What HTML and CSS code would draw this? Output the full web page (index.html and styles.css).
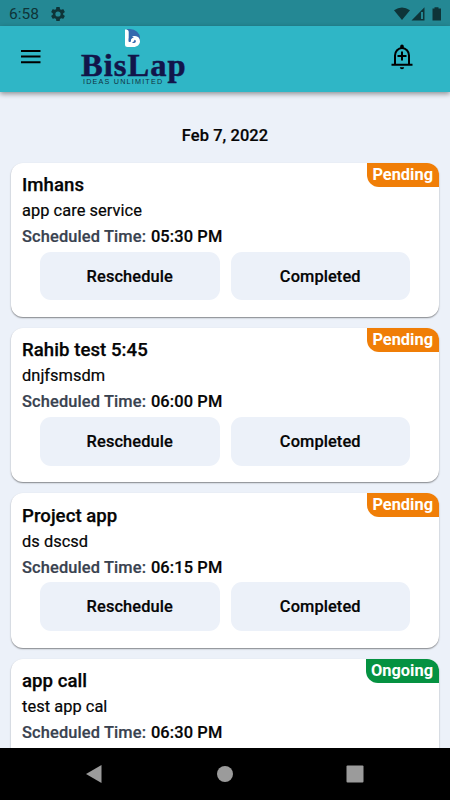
FILE: index.html
```html
<!DOCTYPE html>
<html lang="en">
<head>
  <meta charset="UTF-8">
  <title>BisLap</title>
  <link rel="stylesheet" href="styles.css">
</head>
<body>
  <div class="status-bar">
    <span class="clock">6:58</span>
    <svg class="gear" width="16" height="16" viewBox="1 1 22 22"><path d="M19.14 12.94c.04-.3.06-.61.06-.94s-.02-.64-.07-.94l2.03-1.58a.5.5 0 0 0 .12-.61l-1.92-3.32a.49.49 0 0 0-.59-.22l-2.39.96a7 7 0 0 0-1.62-.94l-.36-2.54A.48.48 0 0 0 13.92 2.4h-3.84a.47.47 0 0 0-.47.41l-.36 2.54a7.4 7.4 0 0 0-1.62.94l-2.39-.96a.48.48 0 0 0-.59.22L2.74 8.87a.47.47 0 0 0 .12.61l2.03 1.58a6 6 0 0 0 0 1.88l-2.03 1.58a.5.5 0 0 0-.12.61l1.92 3.32c.12.22.37.29.59.22l2.39-.96c.5.38 1.03.7 1.62.94l.36 2.54c.05.24.24.41.48.41h3.84c.24 0 .44-.17.47-.41l.36-2.54a7 7 0 0 0 1.62-.94l2.39.96c.22.08.47 0 .59-.22l1.92-3.32a.47.47 0 0 0-.12-.61zM12 15.6a3.6 3.6 0 1 1 0-7.2 3.6 3.6 0 0 1 0 7.2z"/></svg>
    <svg class="signals" width="50" height="16" viewBox="0 0 50 16">
      <path d="M1 4.3Q9 -1.3 17 4.3L9 14z"/>
      <path d="M31.5 1.3V14.5H18.5zM28 6v7h2V6z" fill-rule="evenodd"/>
      <path d="M41.5 1.2h4v1.3h2.500v12h-8.500v-12h2z"/>
    </svg>
  </div>

  <header class="app-bar">
    <svg class="menu" width="20" height="14" viewBox="0 0 20 14"><path d="M0 1h19.5M0 6.5h19.5M0 12.2h19.5"/></svg>
    <div class="logo">
      <svg class="logo-mark" width="16" height="18" viewBox="0 0 16 18">
        <path d="M2 0H5a10 9 0 0 1 10 9v3H2z" fill="#3568ae"/>
        <path d="M0 .5Q3.7 0 3.7 3v9H6C5.300 8.500 7.500 6.800 10 7c3 .3 5 2.300 5 5.200 0 3.400-3 5.800-6.500 5.800H2.500Q0 18 0 15.500z" fill="#fff"/>
        <path d="M3.700 13V9.500Q6 6.500 9 8.500C6.500 8.800 5.500 10.500 5.700 13zM7 13.200q2.500-.2 2.500-2.500 2 .5 1.300 2.400-1.500 1.900-3.800.1z" fill="#3568ae"/>
      </svg>
      <span class="logo-name">BisLap</span>
      <span class="logo-tagline">IDEAS UNLIMITED</span>
    </div>
    <svg class="bell" width="22" height="26" viewBox="0 0 22 26">
      <path class="bell-line" d="M4 20V11.5a7 7.5 0 0 1 14 0V20M.5 20.8h21M11 7.5v9M6.5 12h9"/>
      <path d="M9.2 4V2.2a1.8 1.8 0 0 1 3.6 0V4zM8.8 23.2h4.4Q13 25.2 11 25.2T8.8 23.2z"/>
    </svg>
  </header>

  <main class="schedule">
    <h1 class="date">Feb 7, 2022</h1>

    <section class="card">
      <span class="badge pending">Pending</span>
      <h2>Imhans</h2>
      <p class="detail">app care service</p>
      <p class="time"><span>Scheduled Time:</span> 05:30 PM</p>
      <div class="actions">
        <button>Reschedule</button>
        <button>Completed</button>
      </div>
    </section>

    <section class="card">
      <span class="badge pending">Pending</span>
      <h2>Rahib test 5:45</h2>
      <p class="detail">dnjfsmsdm</p>
      <p class="time"><span>Scheduled Time:</span> 06:00 PM</p>
      <div class="actions">
        <button>Reschedule</button>
        <button>Completed</button>
      </div>
    </section>

    <section class="card">
      <span class="badge pending">Pending</span>
      <h2>Project app</h2>
      <p class="detail">ds dscsd</p>
      <p class="time"><span>Scheduled Time:</span> 06:15 PM</p>
      <div class="actions">
        <button>Reschedule</button>
        <button>Completed</button>
      </div>
    </section>

    <section class="card">
      <span class="badge ongoing">Ongoing</span>
      <h2>app call</h2>
      <p class="detail">test app cal</p>
      <p class="time"><span>Scheduled Time:</span> 06:30 PM</p>
    </section>
  </main>

  <nav class="nav-bar">
    <svg width="18" height="20" viewBox="0 0 18 20"><path d="M1 10L16.5 1v18z"/></svg>
    <svg width="18" height="18" viewBox="0 0 18 18"><circle cx="9" cy="9" r="8"/></svg>
    <svg width="18" height="18" viewBox="0 0 18 18"><rect x="0.5" y="0.5" width="17" height="17" rx="1"/></svg>
  </nav>
</body>
</html>
```
FILE: styles.css
```css
* { box-sizing: border-box; }
body {
  margin: 0;
  height: 800px;
  display: flex;
  flex-direction: column;
  overflow: hidden;
  background: #ecf1f9;
  color: #050505;
  font-family: Roboto, sans-serif;
}
h1, h2, p { margin: 0; }
svg { display: block; flex-shrink: 0; }

.status-bar {
  height: 26px;
  flex-shrink: 0;
  display: flex;
  align-items: center;
  padding: 1px 8px 0 9px;
  background: #248894;
  color: #0e3438;
  fill: #0e3438;
}
.clock { width: 41px; font-size: 15.5px; }
.signals { margin-left: auto; margin-right: -1px; }

.app-bar {
  height: 66px;
  flex-shrink: 0;
  display: flex;
  align-items: flex-start;
  padding: 0 37px 0 21px;
  background: #2fb6c6;
  box-shadow: 0 2px 5px rgba(0, 0, 0, 0.4);
  z-index: 1;
}
.menu { margin-top: 24px; stroke: #000; stroke-width: 2; }
.logo {
  width: 106px;
  margin-left: 40px;
  display: flex;
  flex-direction: column;
  color: #12154a;
}
.logo-mark { margin: 3px 0 0 44px; }
.logo-name {
  margin-top: 1px;
  font: bold 32.5px/34px "Liberation Serif", serif;
  letter-spacing: 1.05px;
  -webkit-text-stroke: 0.5px #12154a;
}
.logo-tagline {
  margin: -4px 0 0 2px;
  color: #10303f;
  font: 7.2px/8px "Liberation Sans", sans-serif;
  letter-spacing: 1.2px;
  white-space: nowrap;
}
.bell { margin: 18px 0 0 auto; }
.bell-line { fill: none; stroke: #000; stroke-width: 2; }

.schedule {
  flex: 1;
  min-height: 0;
  overflow: hidden;
  display: flex;
  flex-direction: column;
  gap: 11px;
  padding: 0 11px;
}
.date {
  height: 60px;
  flex-shrink: 0;
  padding-top: 33px;
  text-align: center;
  font-size: 16.4px;
  line-height: 22px;
  font-weight: 500;
  letter-spacing: 0.1px;
  -webkit-text-stroke: 0.2px currentColor;
}

.card {
  position: relative;
  height: 154.2px;
  flex-shrink: 0;
  padding: 9.3px 11px 0;
  border-radius: 12px;
  background: #fff;
  box-shadow: 0 1px 1.5px rgba(0, 0, 0, 0.45);
}
.card h2 {
  font-size: 18.6px;
  line-height: 26px;
  font-weight: 500;
  letter-spacing: 0.05px;
  -webkit-text-stroke: 0.25px currentColor;
}
.detail {
  font-size: 16.4px;
  line-height: 26px;
  letter-spacing: 0.05px;
  -webkit-text-stroke: 0.2px currentColor;
}
.time {
  font-size: 16.4px;
  line-height: 25px;
  font-weight: 500;
  letter-spacing: 0.13px;
  -webkit-text-stroke: 0.2px currentColor;
}
.time span { margin-right: 0.6px; color: #39424f; }
.badge {
  position: absolute;
  top: 0;
  right: 0;
  height: 24px;
  padding: 0 6px 0 5px;
  border-radius: 0 12px 0 12px;
  color: #fff;
  font-size: 16.4px;
  line-height: 24px;
  font-weight: 700;
}
.pending { background: #f07e07; }
.ongoing { background: #059241; }

.actions { display: flex; gap: 11px; padding: 2.7px 18px 0; }
.actions button {
  flex: 1;
  height: 48.5px;
  border: 0;
  border-radius: 11px;
  background: #ecf1f9;
  color: inherit;
  font: 500 16.4px Roboto, sans-serif;
  letter-spacing: 0.1px;
  -webkit-text-stroke: 0.2px currentColor;
}

.nav-bar {
  height: 52px;
  flex-shrink: 0;
  display: flex;
  align-items: center;
  justify-content: space-between;
  padding: 0 86px 0 85px;
  background: #000;
  fill: #9b9b9b;
  z-index: 1;
}
```
